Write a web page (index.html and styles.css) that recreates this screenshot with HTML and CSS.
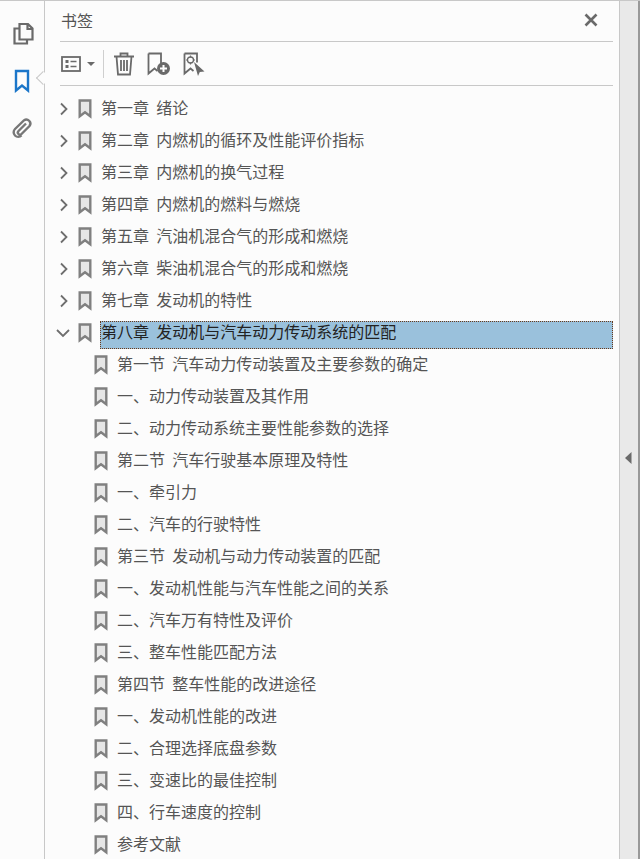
FILE: index.html
```html
<!DOCTYPE html>
<html lang="zh">
<head>
<meta charset="utf-8">
<title>书签</title>
<link rel="stylesheet" href="styles.css">
</head>
<body>
<svg class="defs" width="0" height="0" aria-hidden="true">
  <symbol id="bm" viewBox="0 0 14 20"><path d="M1.700 1.500h10.600v15.800l-5.300-4-5.300 4z" fill="#e6e6e6" stroke="#808080" stroke-width="2.400"/></symbol>
  <symbol id="cr" viewBox="0 0 10 14"><path d="M1 1.500l5.500 5.500-5.500 5.500" fill="none" stroke="#6e6e6e" stroke-width="1.800"/></symbol>
  <symbol id="cd" viewBox="0 0 14 10"><path d="M1 2l6 6 6-6" fill="none" stroke="#6e6e6e" stroke-width="1.800"/></symbol>
</svg>
<div class="app">
  <nav class="rail">
    <svg class="rail-icon pages" width="24" height="24" viewBox="0 0 24 24"><path d="M9.500 2h8.500l4.500 4.500v11h-13zM17.500 2v5h5" fill="none" stroke="#6a6a6a" stroke-width="2.200"/><path d="M9.500 6.500h-5v15h12.500v-4" fill="none" stroke="#6a6a6a" stroke-width="2.200"/></svg>
    <svg class="rail-icon mark" width="24" height="24" viewBox="0 0 24 24"><path d="M6 2h12v19.500l-6-5-6 5z" fill="none" stroke="#1b76c9" stroke-width="2.400"/></svg>
    <svg class="rail-icon clip" width="24" height="24" viewBox="0 0 24 24"><path d="M16 7.500L8.500 15a2 2 0 0 0 3 3L19.500 10a4 4 0 0 0-5.600-5.600L5 13a4.500 4.500 0 0 0 6.500 6.500" fill="none" stroke="#777" stroke-width="2.400"/></svg>
    <span class="pointer"></span>
  </nav>
  <main class="panel">
    <header class="head">
      <span class="title">书签</span>
      <svg class="close" width="14" height="14" viewBox="0 0 14 14"><path d="M1.500 1.500l11 11M12.500 1.500l-11 11" stroke="#6a6a6a" stroke-width="2.600"/></svg>
    </header>
    <div class="tools">
      <svg class="t-options" width="20" height="16" viewBox="0 0 20 16"><rect x="1" y="1" width="18" height="14" fill="none" stroke="#6a6a6a" stroke-width="1.800"/><rect x="4.500" y="4" width="3" height="3" fill="#6a6a6a"/><rect x="4.500" y="9" width="3" height="3" fill="#6a6a6a"/><path d="M9.500 5.500h6M9.500 10.500h6" stroke="#6a6a6a" stroke-width="1.600"/></svg>
      <svg class="t-caret" width="8" height="4" viewBox="0 0 8 4"><path d="M0 0h8l-4 4z" fill="#6a6a6a"/></svg>
      <span class="t-sep"></span>
      <svg class="t-trash" width="22" height="24" viewBox="0 0 22 24"><path d="M1 4.500h20M7.500 4v-2.500h7v2.500M3.500 4.500l1.500 18h12l1.500-18M8 8v11M11 8v11M14 8v11" fill="none" stroke="#6a6a6a" stroke-width="1.800"/></svg>
      <svg class="t-add" width="24" height="24" viewBox="0 0 24 24"><path d="M1.500 1.500h12.500v10M1.500 1.500v20l6-5 3 2.500" fill="none" stroke="#6a6a6a" stroke-width="1.800"/><circle cx="16.500" cy="16.500" r="6.500" fill="#6a6a6a"/><path d="M13 16.500h7M16.500 13v7" stroke="#fff" stroke-width="2"/></svg>
      <svg class="t-find" width="22" height="24" viewBox="0 0 22 24"><path d="M1.500 1.500h12.500v9M1.500 1.500v20l6-5 3 2.500" fill="none" stroke="#6a6a6a" stroke-width="1.800"/><circle cx="7.500" cy="8" r="3" fill="none" stroke="#6a6a6a" stroke-width="1.300"/><path d="M7.500 3.500v2M7.500 10.500v2M3 8h2M10 8h2" stroke="#6a6a6a" stroke-width="1.200"/><path d="M11 10l10.500 9.500-4.700.5-1.800 4z" fill="#6a6a6a"/></svg>
    </div>
    <ul class="tree">
      <li class="row"><svg class="tw" width="10" height="14"><use href="#cr"/></svg><svg class="bm" width="14" height="20"><use href="#bm"/></svg><span class="label">第一章&nbsp;&nbsp;绪论</span></li>
      <li class="row"><svg class="tw" width="10" height="14"><use href="#cr"/></svg><svg class="bm" width="14" height="20"><use href="#bm"/></svg><span class="label">第二章&nbsp;&nbsp;内燃机的循环及性能评价指标</span></li>
      <li class="row"><svg class="tw" width="10" height="14"><use href="#cr"/></svg><svg class="bm" width="14" height="20"><use href="#bm"/></svg><span class="label">第三章&nbsp;&nbsp;内燃机的换气过程</span></li>
      <li class="row"><svg class="tw" width="10" height="14"><use href="#cr"/></svg><svg class="bm" width="14" height="20"><use href="#bm"/></svg><span class="label">第四章&nbsp;&nbsp;内燃机的燃料与燃烧</span></li>
      <li class="row"><svg class="tw" width="10" height="14"><use href="#cr"/></svg><svg class="bm" width="14" height="20"><use href="#bm"/></svg><span class="label">第五章&nbsp;&nbsp;汽油机混合气的形成和燃烧</span></li>
      <li class="row"><svg class="tw" width="10" height="14"><use href="#cr"/></svg><svg class="bm" width="14" height="20"><use href="#bm"/></svg><span class="label">第六章&nbsp;&nbsp;柴油机混合气的形成和燃烧</span></li>
      <li class="row"><svg class="tw" width="10" height="14"><use href="#cr"/></svg><svg class="bm" width="14" height="20"><use href="#bm"/></svg><span class="label">第七章&nbsp;&nbsp;发动机的特性</span></li>
      <li class="row open"><svg class="tw-d" width="14" height="10"><use href="#cd"/></svg><svg class="bm" width="14" height="20"><use href="#bm"/></svg><span class="label selected">第八章&nbsp;&nbsp;发动机与汽车动力传动系统的匹配</span></li>
      <li class="row sub"><svg class="bm" width="14" height="20"><use href="#bm"/></svg><span class="label">第一节&nbsp;&nbsp;汽车动力传动装置及主要参数的确定</span></li>
      <li class="row sub"><svg class="bm" width="14" height="20"><use href="#bm"/></svg><span class="label">一、动力传动装置及其作用</span></li>
      <li class="row sub"><svg class="bm" width="14" height="20"><use href="#bm"/></svg><span class="label">二、动力传动系统主要性能参数的选择</span></li>
      <li class="row sub"><svg class="bm" width="14" height="20"><use href="#bm"/></svg><span class="label">第二节&nbsp;&nbsp;汽车行驶基本原理及特性</span></li>
      <li class="row sub"><svg class="bm" width="14" height="20"><use href="#bm"/></svg><span class="label">一、牵引力</span></li>
      <li class="row sub"><svg class="bm" width="14" height="20"><use href="#bm"/></svg><span class="label">二、汽车的行驶特性</span></li>
      <li class="row sub"><svg class="bm" width="14" height="20"><use href="#bm"/></svg><span class="label">第三节&nbsp;&nbsp;发动机与动力传动装置的匹配</span></li>
      <li class="row sub"><svg class="bm" width="14" height="20"><use href="#bm"/></svg><span class="label">一、发动机性能与汽车性能之间的关系</span></li>
      <li class="row sub"><svg class="bm" width="14" height="20"><use href="#bm"/></svg><span class="label">二、汽车万有特性及评价</span></li>
      <li class="row sub"><svg class="bm" width="14" height="20"><use href="#bm"/></svg><span class="label">三、整车性能匹配方法</span></li>
      <li class="row sub"><svg class="bm" width="14" height="20"><use href="#bm"/></svg><span class="label">第四节&nbsp;&nbsp;整车性能的改进途径</span></li>
      <li class="row sub"><svg class="bm" width="14" height="20"><use href="#bm"/></svg><span class="label">一、发动机性能的改进</span></li>
      <li class="row sub"><svg class="bm" width="14" height="20"><use href="#bm"/></svg><span class="label">二、合理选择底盘参数</span></li>
      <li class="row sub"><svg class="bm" width="14" height="20"><use href="#bm"/></svg><span class="label">三、变速比的最佳控制</span></li>
      <li class="row sub"><svg class="bm" width="14" height="20"><use href="#bm"/></svg><span class="label">四、行车速度的控制</span></li>
      <li class="row sub"><svg class="bm" width="14" height="20"><use href="#bm"/></svg><span class="label">参考文献</span></li>
    </ul>
  </main>
  <aside class="strip">
    <svg width="7" height="12" viewBox="0 0 7 12"><path d="M6.500 0v12L0 6z" fill="#6a6a6a"/></svg>
  </aside>
</div>
</body>
</html>
```
FILE: styles.css
```css
html, body {
  margin: 0;
  padding: 0;
  height: 100%;
  overflow: hidden;
}
body {
  font-family: "Noto Sans CJK SC", "Liberation Sans", sans-serif;
  color: #555;
  background: #fcfcfc;
}
.defs { display: block; height: 0; }
.app {
  display: flex;
  height: 859px;
  box-sizing: border-box;
  border-top: 1px solid #c8c8c8;
}
.rail {
  position: relative;
  flex: 0 0 44px;
  border-right: 1px solid #c8c8c8;
  display: flex;
  flex-direction: column;
  align-items: center;
  padding-top: 21px;
  gap: 23px;
  background: #fcfcfc;
}
.rail-icon { display: block; flex: none; }
.pointer {
  position: absolute;
  left: 38px;
  top: 72px;
  width: 10px;
  height: 10px;
  background: #fcfcfc;
  border-left: 1px solid #c8c8c8;
  border-bottom: 1px solid #c8c8c8;
  transform: rotate(45deg);
  box-sizing: border-box;
}
.panel {
  flex: 0 0 574px;
  padding: 0 6px 0 15px;
  box-sizing: border-box;
  min-width: 0;
  overflow: hidden;
}
.head {
  height: 41px;
  box-sizing: border-box;
  border-bottom: 1px solid #c8c8c8;
  display: flex;
  align-items: center;
  justify-content: space-between;
  padding: 0 15px 2px 1px;
}
.title { font-size: 16px; line-height: 20px; color: #555; }
.tools {
  height: 44px;
  box-sizing: border-box;
  border-bottom: 1px solid #c8c8c8;
  display: flex;
  align-items: center;
  padding: 0 0 0 1px;
}
.t-options { margin-right: 6px; }
.t-caret { margin-right: 8px; }
.t-sep { width: 1px; height: 28px; background: #cfcfcf; margin-right: 9px; }
.t-trash { margin-right: 12px; }
.t-add { margin-right: 12px; }
.tree {
  list-style: none;
  margin: 0;
  padding: 6px 0 0;
}
.row {
  height: 32px;
  display: flex;
  align-items: center;
  font-size: 16px;
  white-space: nowrap;
}
.tw { margin-top: 2px; margin-right: 8px; flex: none; }
.tw-d { margin-top: 2px; margin-left: -4px; margin-right: 8px; flex: none; }
.bm { flex: none; margin-top: 2px; margin-right: 9px; }
.sub { padding-left: 34px; }
.label { line-height: 26px; padding-bottom: 2px; display: block; }
.selected {
  flex: 1;
  align-self: flex-start;
  margin: 5px 0 0 -1px;
  padding: 0 0 0 1px;
  background: #9ac1dc;
  color: #222;
  outline: 1px dotted #6b3a1a;
  outline-offset: -1px;
  height: 28px;
  line-height: 21px;
  box-sizing: border-box;
}
.strip {
  flex: 1;
  box-sizing: border-box;
  background: #e9e9e9;
  border-left: 1px solid #c8c8c8;
  border-right: 2px solid #999;
  display: flex;
  align-items: center;
  justify-content: center;
  padding-bottom: 1px;
  padding-right: 1px;
}
.strip svg { margin-top: 57px; }
```
